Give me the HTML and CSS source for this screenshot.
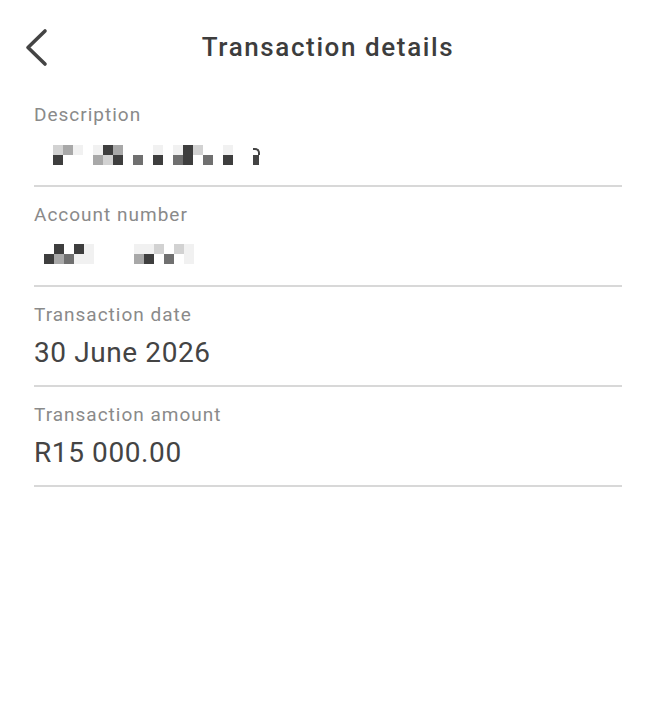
FILE: index.html
```html
<!DOCTYPE html>
<html lang="en">
<head>
    <meta charset="UTF-8">
    <meta name="viewport" content="width=device-width, initial-scale=1.0">
    <title>Transaction details</title>
    <link rel="stylesheet" href="styles.css">
</head>
<body>
    <div class="header">
        <button class="back" aria-label="Back">
            <svg width="30" height="46" viewBox="0 0 30 46">
                <path d="M22 7 L5 23.5 L22 40" fill="none" stroke="#444" stroke-width="3.6" stroke-linecap="round" stroke-linejoin="round"/>
            </svg>
        </button>
        <h1>Transaction details</h1>
        <div></div>
    </div>

    <div class="details">
        <div class="row">
            <div class="label">Description</div>
            <div class="value">
                <div class="mosaic desc">
                    <!-- top row -->
                    <span class="m2"></span><span class="m3"></span><span class="m1"></span><span></span><span class="m1"></span><span class="m5"></span><span class="m3"></span><span></span><span></span><span></span><span class="m1"></span><span></span><span class="m1"></span><span class="m5"></span><span class="m2"></span><span></span><span></span><span class="m1"></span><span></span><span></span><span class="hook"></span>
                    <!-- bottom row -->
                    <span class="m5"></span><span></span><span></span><span></span><span class="m3"></span><span class="m2"></span><span class="m5"></span><span></span><span class="m4"></span><span></span><span class="m5"></span><span></span><span class="m4"></span><span class="m5"></span><span></span><span class="m4"></span><span></span><span class="m5"></span><span></span><span></span><span class="stem"></span>
                </div>
            </div>
        </div>
        <div class="row">
            <div class="label">Account number</div>
            <div class="value">
                <div class="mosaic acc">
                    <span></span><span class="m5"></span><span></span><span class="m5"></span><span class="m1"></span><span></span><span></span><span></span><span></span><span class="m1"></span><span class="m1"></span><span class="m2"></span><span></span><span class="m2"></span><span class="m1"></span>
                    <span class="m5"></span><span class="m3"></span><span class="m4"></span><span class="m1"></span><span class="m1"></span><span></span><span></span><span></span><span></span><span class="m3"></span><span class="m5"></span><span></span><span class="m4"></span><span></span><span class="m1"></span>
                </div>
            </div>
        </div>
        <div class="row">
            <div class="label">Transaction date</div>
            <div class="value">30 June 2026</div>
        </div>
        <div class="row">
            <div class="label">Transaction amount</div>
            <div class="value">R15 000.00</div>
        </div>
    </div>
</body>
</html>
```

FILE: styles.css
```css
body {
    margin: 0;
    font-family: Roboto, "Liberation Sans", sans-serif;
    background-color: #ffffff;
    color: #444444;
}
.header {
    display: grid;
    grid-template-columns: 1fr auto 1fr;
    align-items: center;
    padding: 31px 0 24px;
}
.header h1 {
    margin: 0;
    font-size: 26px;
    line-height: 32px;
    font-weight: 500;
    letter-spacing: 1.6px;
    color: #3d3d3d;
}
.back {
    justify-self: start;
    margin-left: 23px;
    padding: 0;
    border: none;
    background: none;
    height: 32px;
    display: flex;
    align-items: center;
    cursor: pointer;
}
.details {
    margin: 0 34px;
}
.row {
    padding: 16px 0 15px;
    border-bottom: 2px solid #d8d8d8;
}
.label {
    font-size: 19px;
    line-height: 24px;
    letter-spacing: 1px;
    color: #8a8a8a;
}
.value {
    margin-top: 9px;
    font-size: 28px;
    line-height: 34px;
    height: 34px;
    letter-spacing: 0.6px;
    color: #444444;
}
.mosaic {
    display: grid;
    grid-template-rows: repeat(2, 10px);
    padding-top: 9px;
}
.mosaic.desc {
    grid-template-columns: repeat(21, 10px);
    margin-left: 19px;
}
.mosaic.acc {
    grid-template-columns: repeat(15, 10px);
    margin-left: 10px;
    padding-top: 8px;
}
.m1 { background-color: #f1f1f1; }
.m2 { background-color: #d2d2d2; }
.m3 { background-color: #a8a8a8; }
.m4 { background-color: #707070; }
.m5 { background-color: #3e3e3e; }
.hook {
    box-sizing: border-box;
    width: 7px;
    height: 7px;
    margin-top: 3px;
    border-top: 2px solid #444;
    border-right: 2px solid #444;
    border-top-right-radius: 5px;
}
.stem {
    width: 6px;
    background-color: #444;
}
```
